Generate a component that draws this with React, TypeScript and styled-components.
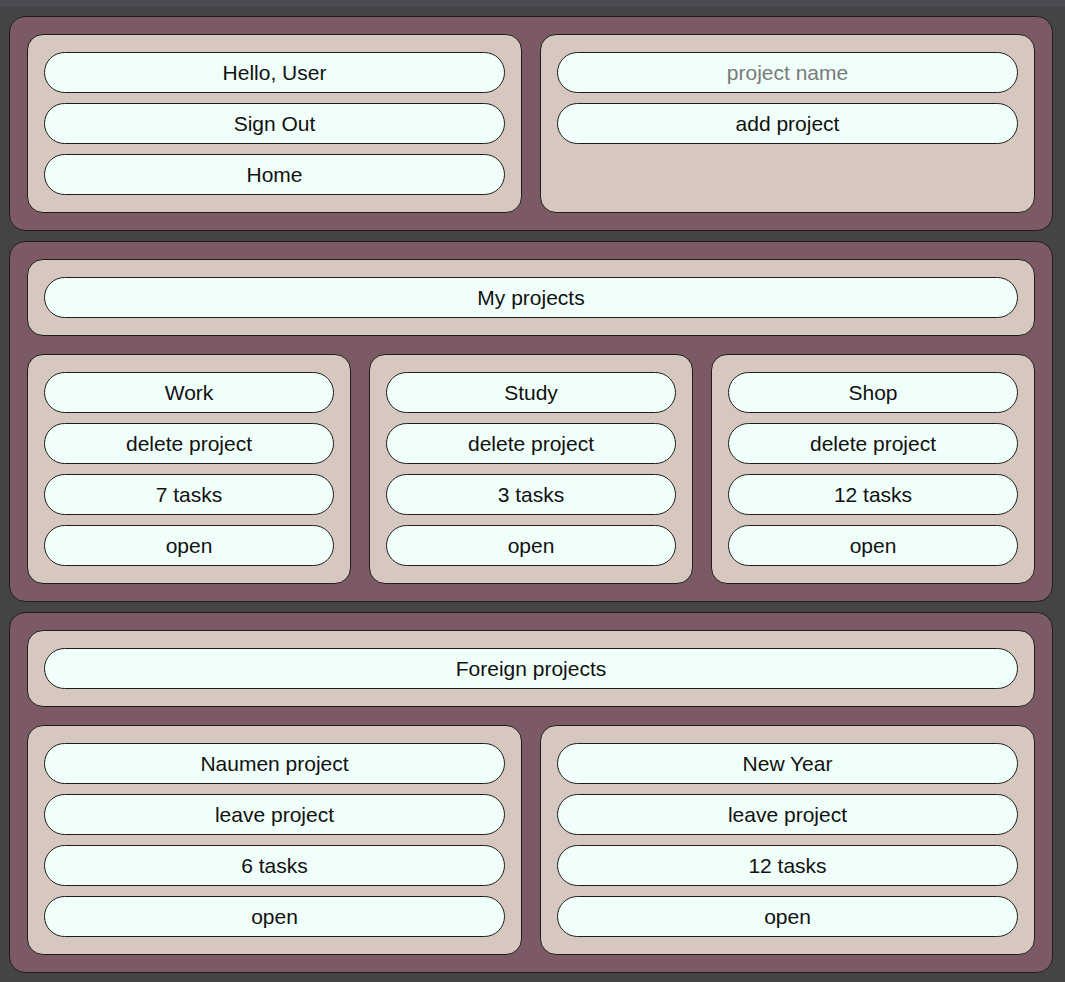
import styled, { createGlobalStyle } from "styled-components";

const GlobalStyle = createGlobalStyle`
    body {
        margin: 0;
        background-color: #444444;
        font-family: "Liberation Sans", Arial, sans-serif;
    }
`;

const Page = styled.div`
    display: flex;
    flex-direction: column;
    gap: 10px;
    border-top: 7px solid #494952;
    padding: 9px 12px 10px 9px;
`;

const Panel = styled.section`
    display: flex;
    flex-direction: column;
    gap: 18px;
    padding: 17px;
    background-color: #7b5a66;
    border: 1px solid #1e1e1e;
    border-radius: 16px;
`;

const Grid = styled.div<{ cols: number }>`
    display: grid;
    grid-template-columns: repeat(${(props) => props.cols}, 1fr);
    gap: 18px;
`;

const Card = styled.div`
    display: flex;
    flex-direction: column;
    gap: 10px;
    padding: 17px 16px;
    background-color: #d6c8be;
    border: 1px solid #1e1e1e;
    border-radius: 16px;
`;

const Pill = styled.button`
    height: 41px;
    box-sizing: border-box;
    width: 100%;
    background-color: #f0fffa;
    border: 1px solid #1e1e1e;
    border-radius: 21px;
    font-family: "Liberation Sans", Arial, sans-serif;
    font-size: 21px;
    color: #111;
    text-align: center;
    padding: 0 16px;
`;

const PillInput = styled.input`
    height: 41px;
    box-sizing: border-box;
    width: 100%;
    background-color: #f0fffa;
    border: 1px solid #1e1e1e;
    border-radius: 21px;
    font-family: "Liberation Sans", Arial, sans-serif;
    font-size: 21px;
    color: #111;
    text-align: center;
    padding: 0 16px;
    &::placeholder {
        color: #7a7a7a;
    }
`;

const myProjects = [
    { name: "Work", tasks: 7 },
    { name: "Study", tasks: 3 },
    { name: "Shop", tasks: 12 },
];

const foreignProjects = [
    { name: "Naumen project", tasks: 6 },
    { name: "New Year", tasks: 12 },
];

const ProjectCard = ({
    name,
    tasks,
    action,
}: {
    name: string;
    tasks: number;
    action: string;
}) => (
    <Card>
        <Pill>{name}</Pill>
        <Pill>{action}</Pill>
        <Pill>{tasks} tasks</Pill>
        <Pill>open</Pill>
    </Card>
);

const App = () => {
    return (
        <>
            <GlobalStyle />
            <Page>
                <Panel>
                    <Grid cols={2}>
                        <Card>
                            <Pill>Hello, User</Pill>
                            <Pill>Sign Out</Pill>
                            <Pill>Home</Pill>
                        </Card>
                        <Card>
                            <PillInput placeholder="project name" />
                            <Pill>add project</Pill>
                        </Card>
                    </Grid>
                </Panel>
                <Panel>
                    <Card>
                        <Pill>My projects</Pill>
                    </Card>
                    <Grid cols={3}>
                        {myProjects.map((p) => (
                            <ProjectCard
                                key={p.name}
                                name={p.name}
                                tasks={p.tasks}
                                action="delete project"
                            />
                        ))}
                    </Grid>
                </Panel>
                <Panel>
                    <Card>
                        <Pill>Foreign projects</Pill>
                    </Card>
                    <Grid cols={2}>
                        {foreignProjects.map((p) => (
                            <ProjectCard
                                key={p.name}
                                name={p.name}
                                tasks={p.tasks}
                                action="leave project"
                            />
                        ))}
                    </Grid>
                </Panel>
            </Page>
        </>
    );
};

export default App;
